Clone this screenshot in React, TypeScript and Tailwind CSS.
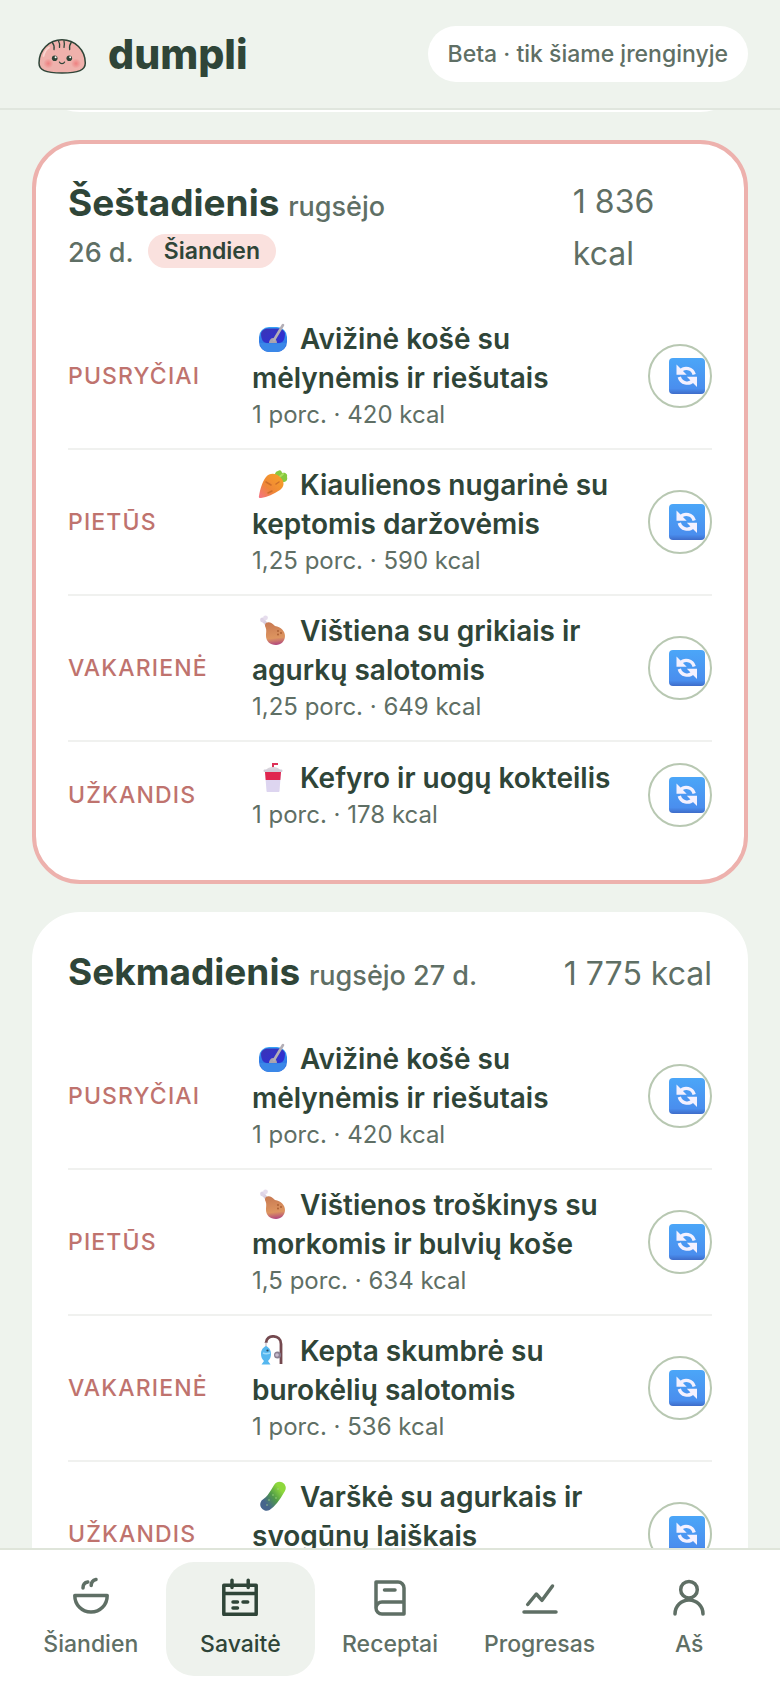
import type { ReactNode } from 'react';

interface Meal {
  slot: string;
  icon: keyof typeof emojis;
  name: string;
  info: string;
}

interface Day {
  name: string;
  month: string;
  day: string;
  kcal: string;
  today?: boolean;
  meals: Meal[];
}

const emojis = {
  bowl: (
    <>
      <rect x="1" y="4" width="28" height="25" rx="10" fill="url(#bowlOut)" />
      <path d="M3 11c0-3 3-5.500 7-5.500h10c4 0 7 2.500 7 5.500 0 5-2 9-6 9H9c-4 0-6-4-6-9z" fill="url(#bowlIn)" />
      <path d="M11 20c0-3 2-5 4-5s4 2 4 5z" fill="#a9a3ad" />
      <path d="M16 17L25 2" stroke="#b3aeb6" strokeWidth="2.600" strokeLinecap="round" />
      <path d="M2 19.500c4 1 22 1 26 0 0 5-4 9.500-9 9.500h-8c-5 0-9-4.500-9-9.500z" fill="#3b88e8" />
    </>
  ),
  carrot: (
    <>
      <path d="M17 9c-1-4 1-7 3-7 2-2 4 0 4 2 3-1 6 1 5 4 1 3-1 5-4 5-1 2-4 2-6 0z" fill="#86c940" />
      <path d="M19 10l6-5" stroke="#a9df5c" strokeWidth="2" strokeLinecap="round" />
      <path d="M8 8c4-5 11-4 15 1 4 4 3 9-1 12-6 4-13 7-19 8-2 .500-2.500-1-2-2C2 21 4 13 8 8z" fill="url(#carrot)" />
      <path d="M8 13l5 3M10 24l4-2M18 15l3-2" stroke="#cc6d2b" strokeWidth="1.500" strokeLinecap="round" />
    </>
  ),
  chicken: (
    <>
      <path d="M9 10L5 5" stroke="#d9cfdf" strokeWidth="3.500" strokeLinecap="round" />
      <circle cx="4.500" cy="5" r="2.400" fill="#ddd3e6" />
      <circle cx="7.500" cy="2.800" r="2.400" fill="#e6dded" />
      <path d="M8 8c3-2 6 0 9 3 6 1 10 5 10 10 0 5-4 9-9 9-6 0-10-4-10-9 0-4 1-6-1-10 0-1 0-2 1-3z" fill="url(#chicken)" />
      <g fill="#a85b30">
        <circle cx="20" cy="16" r="0.900" />
        <circle cx="23" cy="18" r="0.900" />
        <circle cx="20" cy="19.500" r="0.900" />
      </g>
    </>
  ),
  cup: (
    <>
      <path d="M15 9V2h5" stroke="#dd3158" strokeWidth="2" fill="none" />
      <path d="M8 8c2-4 12-4 14 0z" fill="#d9d4dc" />
      <rect x="5.500" y="7.500" width="19" height="2.500" rx="1.200" fill="#d2ccd8" />
      <path d="M7 10h16l-1.500 19c0 .600-.500 1-1 1h-11c-.500 0-1-.400-1-1z" fill="#ddd5f0" />
      <path d="M7 10h16l-.700 8H7.700z" fill="#e0264f" />
    </>
  ),
  fish: (
    <>
      <path d="M8 8c0-9 15-9 15 1v20" stroke="#74494f" strokeWidth="2.800" fill="none" />
      <path d="M8 7v6" stroke="#b7adb8" strokeWidth="1" />
      <circle cx="19.500" cy="20" r="3.500" fill="#8b7f91" />
      <circle cx="19" cy="20" r="1.800" fill="#c7bcce" />
      <path d="M8 11c4 2 5 5 5 8s-1 5-3 7l2.500 3.500h-9L6 26c-2-2-3-4-3-7s1-6 5-8z" fill="#55b7ef" />
      <path d="M5 18c2 1 4 1 7 0" stroke="#9edbfa" strokeWidth="1.500" fill="none" />
      <circle cx="9.500" cy="15.500" r="1.100" fill="#27475f" />
    </>
  ),
  cucumber: (
    <>
      <path d="M8.500 23.500C13 21 17 15 21.500 7" stroke="url(#cucumber)" strokeWidth="12.500" strokeLinecap="round" />
      <g fill="#a6d989">
        <circle cx="20" cy="8" r="0.700" />
        <circle cx="15" cy="14" r="0.700" />
        <circle cx="18" cy="17" r="0.700" />
        <circle cx="11" cy="19" r="0.700" />
        <circle cx="9" cy="24" r="0.700" />
      </g>
    </>
  ),
};

const days: Day[] = [
  {
    name: 'Šeštadienis',
    month: 'rugsėjo',
    day: '26 d.',
    kcal: '1\u00a0836 kcal',
    today: true,
    meals: [
      { slot: 'Pusryčiai', icon: 'bowl', name: 'Avižinė košė su mėlynėmis ir riešutais', info: '1 porc. · 420 kcal' },
      { slot: 'Pietūs', icon: 'carrot', name: 'Kiaulienos nugarinė su keptomis daržovėmis', info: '1,25 porc. · 590 kcal' },
      { slot: 'Vakarienė', icon: 'chicken', name: 'Vištiena su grikiais ir agurkų salotomis', info: '1,25 porc. · 649 kcal' },
      { slot: 'Užkandis', icon: 'cup', name: 'Kefyro ir uogų kokteilis', info: '1 porc. · 178 kcal' },
    ],
  },
  {
    name: 'Sekmadienis',
    month: 'rugsėjo',
    day: '27 d.',
    kcal: '1\u00a0775 kcal',
    meals: [
      { slot: 'Pusryčiai', icon: 'bowl', name: 'Avižinė košė su mėlynėmis ir riešutais', info: '1 porc. · 420 kcal' },
      { slot: 'Pietūs', icon: 'chicken', name: 'Vištienos troškinys su morkomis ir bulvių koše', info: '1,5 porc. · 634 kcal' },
      { slot: 'Vakarienė', icon: 'fish', name: 'Kepta skumbrė su burokėlių salotomis', info: '1 porc. · 536 kcal' },
      { slot: 'Užkandis', icon: 'cucumber', name: 'Varškė su agurkais ir svogūnų laiškais', info: '1 porc. · 171 kcal' },
    ],
  },
];

const tabs: { label: string; active?: boolean; icon: ReactNode }[] = [
  {
    label: 'Šiandien',
    icon: <path d="M3.800 19.500h32.400C36.200 29 29.200 36 20 36S3.800 29 3.800 19.500zM12 12c0-3.600 1.800-5.500 4.800-6M20.200 9.500c0-3.600 1.800-5.300 4.800-6" />,
  },
  {
    label: 'Savaitė',
    active: true,
    icon: <path d="M3.800 9.300h32.400v29H3.800zM3.800 17.500h32.400M12 4.200v7.300M28.200 4.200v7.300M13 26h4.500M23 26h4.700M13 32h4.500" />,
  },
  {
    label: 'Receptai',
    icon: <path d="M6 32V6h22a6 6 0 0 1 6 6v26H12a6 6 0 0 1 0-12h22M14.500 14h10.500" />,
  },
  {
    label: 'Progresas',
    icon: <path d="M4 36h32M7.700 28.500l8.600-10.500 5.700 6.300L32.500 10" />,
  },
  {
    label: 'Aš',
    icon: <path d="M28.300 13.700a8.300 8.300 0 1 1-16.600 0 8.300 8.300 0 0 1 16.600 0zM6 38a14 14 0 0 1 28 0" />,
  },
];

function Gradients() {
  return (
    <svg className="absolute h-0 w-0" aria-hidden="true">
      <defs>
        <linearGradient id="bowlOut" x1="0" y1="0" x2="0" y2="1">
          <stop offset="0" stopColor="#35a2f5" />
          <stop offset="1" stopColor="#2c5fdb" />
        </linearGradient>
        <linearGradient id="bowlIn" x1="0" y1="0" x2="1" y2="1">
          <stop offset="0" stopColor="#3a35b5" />
          <stop offset="1" stopColor="#2d2fd8" />
        </linearGradient>
        <linearGradient id="carrot" x1="1" y1="0" x2="0" y2="1">
          <stop offset="0.200" stopColor="#f59a2b" />
          <stop offset="0.600" stopColor="#ef8638" />
          <stop offset="1" stopColor="#f57288" />
        </linearGradient>
        <linearGradient id="chicken" x1="0.400" y1="0" x2="0.500" y2="1">
          <stop offset="0" stopColor="#c97a52" />
          <stop offset="0.700" stopColor="#dd9560" />
          <stop offset="1" stopColor="#b0467f" />
        </linearGradient>
        <linearGradient id="cucumber" x1="1" y1="0" x2="0" y2="1">
          <stop offset="0" stopColor="#8ed83c" />
          <stop offset="0.500" stopColor="#4f9a48" />
          <stop offset="1" stopColor="#46658c" />
        </linearGradient>
        <linearGradient id="swap" x1="0" y1="0" x2="0" y2="1">
          <stop offset="0" stopColor="#4ba6f8" />
          <stop offset="0.850" stopColor="#4a8eee" />
          <stop offset="1" stopColor="#3e6cc9" />
        </linearGradient>
        <radialGradient id="cheek">
          <stop offset="0" stopColor="#ee8080" />
          <stop offset="1" stopColor="#ee8080" stopOpacity="0" />
        </radialGradient>
      </defs>
    </svg>
  );
}

function Mascot() {
  return (
    <svg viewBox="0 0 60 60" className="size-[60px]" fill="none" strokeLinecap="round" aria-hidden="true">
      <path d="M7 39C7 26 17 15.800 30 15.800S53.300 26 53.300 39C53.300 46 47 49 30 49S7 46 7 39z" fill="#efb1ac" stroke="#2f4538" strokeWidth="1.500" />
      <path d="M11.500 32c1-4 3-7 5.500-8.500" stroke="#f9d5d0" strokeWidth="1.800" />
      <path d="M20.300 18.500c1.700 2 2.200 4.500 1.700 7M26.500 17c1.200 2 1.400 4 1 6.300M32 17c.500 2 .500 4 0 6.300M39.200 18.500c-1.500 2-2 4.500-1.500 7" stroke="#2f4538" strokeWidth="1.300" />
      <circle cx="16.300" cy="39.500" r="5" fill="url(#cheek)" />
      <circle cx="44" cy="39.500" r="5" fill="url(#cheek)" />
      <circle cx="22.700" cy="34.300" r="2.800" fill="#2f4538" />
      <circle cx="37.300" cy="34.300" r="2.800" fill="#2f4538" />
      <circle cx="23.600" cy="33.200" r="1" fill="#fff" />
      <circle cx="38.200" cy="33.200" r="1" fill="#fff" />
      <path d="M27.400 38c1 2.200 4.200 2.200 5.200 0" stroke="#2f4538" strokeWidth="1.200" />
    </svg>
  );
}

function SwapButton({ meal }: { meal: string }) {
  return (
    <button
      type="button"
      aria-label={'Keisti: ' + meal}
      className="flex size-16 items-center justify-center rounded-full border-2 border-[#b8c8b2] bg-white pl-3.5"
    >
      <svg viewBox="0 0 36 36" className="size-9 shrink-0" aria-hidden="true">
        <rect width="36" height="36" rx="4" fill="url(#swap)" />
        <path d="M11.500 13c4-4.500 12-3 13.700 3.500" stroke="#f4f1ff" strokeWidth="3.400" fill="none" />
        <path d="M7.500 6.500v10.200h10.200z" fill="#f4f1ff" />
        <path d="M24 22.500c-4 4.500-12 3-13.700-3.500" stroke="#f4f1ff" strokeWidth="3.400" fill="none" />
        <path d="M28 29V18.800H17.800z" fill="#f4f1ff" />
      </svg>
    </button>
  );
}

function MealRow({ meal }: { meal: Meal }) {
  return (
    <li className="grid min-h-[106px] grid-cols-[168px_1fr_64px] items-center gap-4 border-b-2 border-[#f0f1ef] py-4 last:border-b-0">
      <span className="text-[23px] font-medium uppercase tracking-wider text-[#bf736e]">{meal.slot}</span>
      <div>
        <h3 className="text-[28px] leading-[39px] font-semibold text-[#2f4538]">
          <svg viewBox="0 0 30 30" className="mr-3 ml-1.5 inline size-[30px] align-[-4px]" fill="none" aria-hidden="true">
            {emojis[meal.icon]}
          </svg>
          {meal.name}
        </h3>
        <p className="text-2xl leading-[34px] text-[#5f6f65]">{meal.info}</p>
      </div>
      <SwapButton meal={meal.name} />
    </li>
  );
}

function DayCard({ day }: { day: Day }) {
  return (
    <section className={'rounded-[48px] border-4 bg-white p-8 ' + (day.today ? 'border-[#edb1ad]' : 'border-white')}>
      <div className="mb-6 flex items-center justify-between gap-4">
        <h2 className="pb-1 text-[37px] leading-[46px] font-bold text-[#2f4538]">
          {day.name}{' '}
          <span className="text-[27px] leading-none font-medium text-[#5f6f65]">
            {day.month}{' '}
            <span className="whitespace-nowrap">
              {day.day}
              {day.today && (
                <span className="ml-3.5 inline-block rounded-full bg-[#fae1de] px-4 align-[3px] text-[23px] leading-[34px] font-semibold text-[#2f4538]">
                  Šiandien
                </span>
              )}
            </span>
          </span>
        </h2>
        <p className="text-[32px] leading-[52px] text-[#5f6f65]">{day.kcal}</p>
      </div>
      <ul>
        {day.meals.map((meal) => (
          <MealRow key={meal.slot} meal={meal} />
        ))}
      </ul>
    </section>
  );
}

export default function App() {
  return (
    <div className="flex h-screen flex-col bg-[#eef3ed] font-['Inter',sans-serif]">
      <Gradients />
      <header className="flex items-center justify-between border-b-2 border-[#e0e6de] px-8 py-6">
        <a href="#" className="flex items-center gap-4 text-[41px] leading-[60px] font-extrabold text-[#2f4538]">
          <Mascot />
          dumpli
        </a>
        <span className="rounded-full bg-white px-5 text-[23px] leading-[56px] font-medium text-[#5f6f65]">
          Beta · tik šiame įrenginyje
        </span>
      </header>

      <main className="min-h-0 flex-1 overflow-y-auto px-8 pb-8 [scrollbar-width:none]">
        {/* end of the day above, scrolled under the header */}
        <div className="-mt-[46px] mb-7 h-12 rounded-b-[48px] bg-white" />
        <div className="flex flex-col gap-7">
          {days.map((day) => (
            <DayCard key={day.name} day={day} />
          ))}
        </div>
      </main>

      <nav className="grid grid-cols-5 border-t-2 border-[#dfe5da] bg-white px-4 py-3">
        {tabs.map((tab) => (
          <a
            key={tab.label}
            href="#"
            className={
              'flex flex-col items-center gap-3 rounded-[28px] pt-3.5 pb-4 text-[23px] leading-8 font-medium ' +
              (tab.active ? 'bg-[#eef2ed] text-[#2f4538]' : 'text-[#5f6f65]')
            }
          >
            <svg
              viewBox="0 0 40 40"
              className="size-10"
              fill="none"
              stroke="currentColor"
              strokeWidth="3.500"
              strokeLinecap="round"
              strokeLinejoin="round"
              aria-hidden="true"
            >
              {tab.icon}
            </svg>
            {tab.label}
          </a>
        ))}
      </nav>
    </div>
  );
}
